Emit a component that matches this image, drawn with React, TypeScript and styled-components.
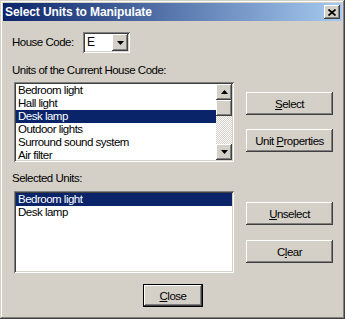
import React, { useState } from "react";
import styled, { createGlobalStyle, css } from "styled-components";

const GlobalStyle = createGlobalStyle`
  html, body {
    margin: 0;
    padding: 0;
    background: #d4d0c8;
  }
  * {
    box-sizing: border-box;
  }
`;

const FACE = "#d4d0c8";
const SHADOW = "#808080";
const DARK = "#404040";
const SELECTED = "#0a246a";

const raised = css`
  box-shadow: inset -1px -1px ${DARK}, inset 1px 1px #fff,
    inset -2px -2px ${SHADOW}, inset 2px 2px ${FACE};
`;

const sunken = css`
  box-shadow: inset 1px 1px ${SHADOW}, inset -1px -1px #fff,
    inset 2px 2px ${DARK}, inset -2px -2px ${FACE};
`;

const Window = styled.div`
  width: 345px;
  height: 319px;
  padding: 3px;
  background: ${FACE};
  font-family: "Liberation Sans", Arial, sans-serif;
  font-size: 11.5px;
  letter-spacing: -0.5px;
  color: #000;
  box-shadow: inset -1px -1px ${DARK}, inset 1px 1px ${FACE},
    inset -2px -2px ${SHADOW}, inset 2px 2px #fff;
  display: flex;
  flex-direction: column;
`;

const TitleBar = styled.div`
  height: 18px;
  padding: 0 2px;
  display: flex;
  align-items: center;
  justify-content: space-between;
  background: linear-gradient(to right, ${SELECTED}, #a6caf0);
`;

const Title = styled.span`
  color: #fff;
  font-weight: bold;
  font-size: 12px;
  letter-spacing: -0.1px;
`;

const CaptionButton = styled.button`
  width: 16px;
  height: 14px;
  padding: 0;
  border: 0;
  background: ${FACE};
  ${raised};
  display: flex;
  align-items: center;
  justify-content: center;
`;

const Body = styled.div`
  flex: 1;
  padding: 11px 0 0 9px;
  display: flex;
  flex-direction: column;
`;

const HouseRow = styled.div`
  display: flex;
  align-items: center;
  height: 21px;
`;

const Label = styled.div<{ width?: number; top?: number }>`
  line-height: 13px;
  height: 13px;
  width: ${(p) => (p.width ? `${p.width}px` : "auto")};
  margin-top: ${(p) => p.top ?? 0}px;
  white-space: nowrap;
`;

const Combo = styled.div`
  width: 47px;
  height: 21px;
  padding: 2px;
  background: #fff;
  ${sunken};
  display: flex;
  align-items: center;
`;

const ComboText = styled.span`
  flex: 1;
  padding-left: 2px;
  line-height: 17px;
  font-size: 12px;
  letter-spacing: 0;
`;

const ArrowButton = styled.div<{ h?: number }>`
  width: 16px;
  height: ${(p) => p.h ?? 16}px;
  background: ${FACE};
  ${raised};
  display: flex;
  align-items: center;
  justify-content: center;
  flex-shrink: 0;
`;

const Section = styled.div<{ top: number }>`
  display: flex;
  margin-top: ${(p) => p.top}px;
`;

const ListBox = styled.div<{ h: number }>`
  width: 220px;
  height: ${(p) => p.h}px;
  margin-left: 2px;
  padding: 2px;
  background: #fff;
  ${sunken};
  display: flex;
`;

const Items = styled.div`
  flex: 1;
  overflow: hidden;
`;

const Item = styled.div<{ selected?: boolean }>`
  height: 13px;
  line-height: 13px;
  padding-left: 2px;
  white-space: nowrap;
  background: ${(p) => (p.selected ? SELECTED : "transparent")};
  color: ${(p) => (p.selected ? "#fff" : "#000")};
`;

const ScrollBar = styled.div`
  width: 16px;
  display: flex;
  flex-direction: column;
`;

const Track = styled.div`
  flex: 1;
  background-color: #fff;
  background-image: repeating-conic-gradient(${FACE} 0 25%, #fff 0 50%);
  background-size: 2px 2px;
`;

const Thumb = styled.div`
  height: 16px;
  background: ${FACE};
  ${raised};
`;

const ButtonColumn = styled.div<{ top: number; gap: number }>`
  display: flex;
  flex-direction: column;
  gap: ${(p) => p.gap}px;
  margin-left: 12px;
  padding-top: ${(p) => p.top}px;
`;

const Button = styled.button<{ isDefault?: boolean; w?: number }>`
  width: ${(p) => p.w ?? 87}px;
  height: 23px;
  padding: 0;
  border: 0;
  background: ${FACE};
  font-family: "Liberation Sans", Arial, sans-serif;
  font-size: 11.5px;
  letter-spacing: -0.5px;
  color: #000;
  ${(p) =>
    p.isDefault
      ? css`
          box-shadow: inset 0 0 0 1px #000, inset -2px -2px ${DARK},
            inset 2px 2px #fff, inset -3px -3px ${SHADOW};
        `
      : raised};
`;

const Footer = styled.div`
  display: flex;
  padding-left: 131px;
  margin-top: 11px;
`;

const Up = () => (
  <svg width="7" height="4" viewBox="0 0 7 4">
    <polygon points="3.5,0 7,4 0,4" fill="#000" />
  </svg>
);

const Down = () => (
  <svg width="7" height="4" viewBox="0 0 7 4">
    <polygon points="0,0 7,0 3.5,4" fill="#000" />
  </svg>
);

const CloseGlyph = () => (
  <svg width="8" height="7" viewBox="0 0 8 7">
    <path d="M0.5 0.5 L7.5 6.5 M7.5 0.5 L0.5 6.5" stroke="#000" strokeWidth="1.7" />
  </svg>
);

const units = [
  "Bedroom light",
  "Hall light",
  "Desk lamp",
  "Outdoor lights",
  "Surround sound system",
  "Air filter",
];

export default function App() {
  const [current, setCurrent] = useState(2);
  const [selected, setSelected] = useState(0);
  const chosen = ["Bedroom light", "Desk lamp"];

  return (
    <>
      <GlobalStyle />
      <Window>
        <TitleBar>
          <Title>Select Units to Manipulate</Title>
          <CaptionButton>
            <CloseGlyph />
          </CaptionButton>
        </TitleBar>
        <Body>
          <HouseRow>
            <Label width={71}>House Code:</Label>
            <Combo>
              <ComboText>E</ComboText>
              <ArrowButton h={17}>
                <Down />
              </ArrowButton>
            </Combo>
          </HouseRow>
          <Label top={11}>Units of the Current House Code:</Label>
          <Section top={5}>
            <ListBox h={80}>
              <Items>
                {units.map((u, i) => (
                  <Item key={u} selected={i === current} onClick={() => setCurrent(i)}>
                    {u}
                  </Item>
                ))}
              </Items>
              <ScrollBar>
                <ArrowButton>
                  <Up />
                </ArrowButton>
                <Thumb />
                <Track />
                <ArrowButton>
                  <Down />
                </ArrowButton>
              </ScrollBar>
            </ListBox>
            <ButtonColumn top={10} gap={14}>
              <Button>
                <u>S</u>elect
              </Button>
              <Button>
                Unit <u>P</u>roperties
              </Button>
            </ButtonColumn>
          </Section>
          <Label top={10}>Selected Units:</Label>
          <Section top={6}>
            <ListBox h={82}>
              <Items>
                {chosen.map((u, i) => (
                  <Item key={u} selected={i === selected} onClick={() => setSelected(i)}>
                    {u}
                  </Item>
                ))}
              </Items>
            </ListBox>
            <ButtonColumn top={11} gap={15}>
              <Button>
                <u>U</u>nselect
              </Button>
              <Button>
                C<u>l</u>ear
              </Button>
            </ButtonColumn>
          </Section>
          <Footer>
            <Button isDefault w={60}>
              <u>C</u>lose
            </Button>
          </Footer>
        </Body>
      </Window>
    </>
  );
}
